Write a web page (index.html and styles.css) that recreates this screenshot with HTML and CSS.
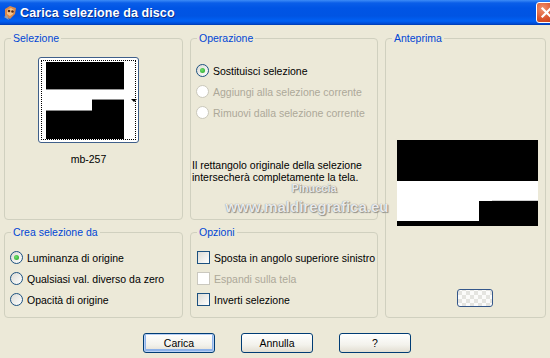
FILE: index.html
```html
<!DOCTYPE html>
<html lang="it">
<head>
    <meta charset="UTF-8">
    <title>Carica selezione da disco</title>
    <link rel="stylesheet" href="styles.css">
</head>
<body>
    <div class="window">
        <div class="titlebar">
            <svg class="app-icon" width="15" height="16" viewBox="0 0 15 16">
                <path d="M2 4 L7 1 L13 3 L12 9 L7 14 L2 11 Z" fill="#d9884a"/>
                <path d="M4 5 L8 3 L11 5 L10 9 L7 11 L4 9 Z" fill="#f4c48c"/>
                <circle cx="6" cy="6" r="1.3" fill="#5a2a10"/>
                <circle cx="9.5" cy="6.5" r="1.3" fill="#5a2a10"/>
                <path d="M1 12 L4 10 L6 15 Z" fill="#9aa0a8"/>
            </svg>
            <span class="title">Carica selezione da disco</span>
            <span class="close-btn">
                <svg width="13" height="13" viewBox="0 0 13 13">
                    <path d="M2.5 2.5 L10.5 10.5 M10.5 2.5 L2.5 10.5" stroke="#fff" stroke-width="2.2" stroke-linecap="square"/>
                </svg>
            </span>
        </div>

        <div class="content">
            <div class="groups">
                <fieldset class="group sel-group">
                    <legend>Selezione</legend>
                    <div class="thumb">
                        <div class="thumb-focus">
                            <svg class="thumb-img" width="78" height="77" viewBox="0 0 78 77">
                                <rect x="0" y="0" width="78" height="77" fill="#fff"/>
                                <rect x="0" y="0" width="78" height="27" fill="#000"/>
                                <rect x="0" y="27" width="78" height="1" fill="#9a9a9a"/>
                                <rect x="46" y="38" width="32" height="39" fill="#000"/>
                                <rect x="46" y="37" width="32" height="1" fill="#8a8a8a"/>
                                <rect x="0" y="49" width="78" height="28" fill="#000"/>
                                <rect x="0" y="48" width="46" height="1" fill="#8a8a8a"/>
                            </svg>
                            <span class="combo-arrow"></span>
                        </div>
                    </div>
                    <div class="thumb-name">mb-257</div>
                </fieldset>

                <fieldset class="group op-group">
                    <legend>Operazione</legend>
                    <div class="option"><span class="radio checked"></span>Sostituisci selezione</div>
                    <div class="option disabled"><span class="radio"></span>Aggiungi alla selezione corrente</div>
                    <div class="option disabled"><span class="radio"></span>Rimuovi dalla selezione corrente</div>
                    <p class="info">Il rettangolo originale della selezione intersecherà completamente la tela.</p>
                </fieldset>

                <fieldset class="group preview-group">
                    <legend>Anteprima</legend>
                    <svg class="preview-img" width="141" height="86" viewBox="0 0 141 86">
                        <rect x="0" y="0" width="141" height="86" fill="#fff"/>
                        <rect x="0" y="0" width="141" height="41" fill="#000"/>
                        <rect x="82" y="61" width="59" height="25" fill="#000"/>
                        <rect x="95" y="60" width="46" height="1" fill="#d0d0d0"/>
                        <rect x="0" y="81" width="141" height="5" fill="#000"/>
                    </svg>
                    <span class="zoom-btn"></span>
                </fieldset>

                <fieldset class="group source-group">
                    <legend>Crea selezione da</legend>
                    <div class="option"><span class="radio checked"></span>Luminanza di origine</div>
                    <div class="option"><span class="radio"></span>Qualsiasi val. diverso da zero</div>
                    <div class="option"><span class="radio"></span>Opacità di origine</div>
                </fieldset>

                <fieldset class="group options-group">
                    <legend>Opzioni</legend>
                    <div class="option"><span class="check"></span>Sposta in angolo superiore sinistro</div>
                    <div class="option disabled"><span class="check"></span>Espandi sulla tela</div>
                    <div class="option"><span class="check"></span>Inverti selezione</div>
                </fieldset>
            </div>

            <div class="buttons">
                <button class="btn default">Carica</button>
                <button class="btn">Annulla</button>
                <button class="btn">?</button>
            </div>

            <div class="watermark">
                <span class="wm-name">Pinuccia</span>
                <span class="wm-site">www.maldiregrafica.eu</span>
            </div>
        </div>
    </div>
</body>
</html>
```

FILE: styles.css
```css
body {
    margin: 0;
    padding: 0;
    background-color: #ece9d8;
    font-family: "Liberation Sans", Arial, sans-serif;
    font-size: 10.5px;
    color: #000;
}
.window {
    width: 550px;
    height: 358px;
    overflow: hidden;
}
.titlebar {
    height: 25px;
    display: flex;
    align-items: center;
    padding-left: 3px;
    overflow: hidden;
    background: linear-gradient(#3d8cf7 0, #0a5ee8 3px, #0055e5 8px, #0054e3 16px, #0061f4 21px, #0048d0 24px, #003aa8 25px);
}
.app-icon {
    flex: none;
    margin-right: 2px;
}
.title {
    flex: 1;
    color: #fff;
    font-weight: bold;
    font-size: 12.5px;
    letter-spacing: 0.1px;
    text-shadow: 1px 1px 0 #0b2e8a;
}
.close-btn {
    flex: none;
    width: 21px;
    height: 21px;
    box-sizing: border-box;
    margin-right: -7px;
    border: 1px solid #fff;
    border-radius: 3px;
    background: radial-gradient(circle at 30% 30%, #f0926f, #d9542d 55%, #c2380f);
    display: flex;
    align-items: center;
    justify-content: center;
}
.content {
    position: relative;
    padding: 7px 4px 0;
}
.groups {
    display: grid;
    grid-template-columns: 179px 188px 161px;
    grid-template-rows: 188px 92px;
    column-gap: 7px;
    row-gap: 6px;
}
.group {
    margin: 0;
    padding: 0;
    min-width: 0;
    border: 1px solid #d0d0bf;
    border-radius: 4px;
}
.group legend {
    margin-left: 6px;
    padding: 0 2px;
    color: #0046d5;
    line-height: 13px;
}
.preview-group {
    grid-column: 3;
    grid-row: 1 / 3;
}
.thumb {
    width: 101px;
    height: 86px;
    box-sizing: border-box;
    margin: 12px 0 0 33px;
    padding: 2px;
    border: 1px solid #3f5f8a;
    border-radius: 3px;
    background-color: #fff;
}
.thumb-focus {
    height: 100%;
    box-sizing: border-box;
    border: 1px dotted #000;
    padding: 1px 0 0 4px;
    display: flex;
    align-items: flex-start;
}
.thumb-img {
    display: block;
    flex: none;
}
.combo-arrow {
    align-self: center;
    margin-left: 7px;
    width: 0;
    height: 0;
    border-left: 3px solid transparent;
    border-right: 3px solid transparent;
    border-top: 3px solid #000;
}
.thumb-name {
    margin: 10px 0 0 33px;
    width: 101px;
    text-align: center;
}
.op-group {
    padding-top: 15px;
}
.source-group,
.options-group {
    padding-top: 8px;
}
.option {
    display: flex;
    align-items: center;
    gap: 4px;
    height: 21px;
    padding-left: 5px;
    white-space: nowrap;
}
.option.disabled {
    color: #aca899;
}
.radio {
    flex: none;
    width: 13px;
    height: 13px;
    box-sizing: border-box;
    border: 1px solid #1c5180;
    border-radius: 50%;
    background: linear-gradient(135deg, #dcdbd5, #fff);
    display: flex;
    align-items: center;
    justify-content: center;
}
.radio.checked::after {
    content: "";
    width: 5px;
    height: 5px;
    border-radius: 50%;
    background: radial-gradient(circle at 40% 40%, #6fe06f, #21a121);
}
.option.disabled .radio {
    border-color: #cac8bb;
    background: #fff;
}
.check {
    flex: none;
    width: 13px;
    height: 13px;
    box-sizing: border-box;
    margin-left: 1px;
    border: 1px solid #1c5180;
    background: linear-gradient(135deg, #dcdbd5, #fff);
}
.option.disabled .check {
    border-color: #cac8bf;
    background: #fff;
}
.info {
    margin: 36px 0 0 1px;
    line-height: 12px;
}
.preview-img {
    display: block;
    margin: 95px 0 0 11px;
}
.zoom-btn {
    display: block;
    width: 36px;
    height: 18px;
    box-sizing: border-box;
    margin: 63px 0 0 71px;
    border: 1px solid #35578a;
    border-radius: 3px;
    background-color: #f4f4f0;
    background-image: conic-gradient(#e4e4e0 25%, #fbfbfa 0 50%, #e4e4e0 0 75%, #fbfbfa 0);
    background-size: 8px 8px;
    background-position: 4px 1px;
}
.buttons {
    display: flex;
    justify-content: center;
    gap: 26px;
    margin-top: 15px;
    padding-left: 4px;
}
.btn {
    width: 72px;
    height: 20px;
    padding: 0;
    font-family: inherit;
    font-size: 10.5px;
    color: #000;
    border: 1px solid #003c74;
    border-radius: 3px;
    background: linear-gradient(#fff, #f3f2ec 60%, #e2ded2);
}
.btn.default {
    box-shadow: inset 0 0 0 1px #b8d0f5, inset 0 -1px 0 2px #8db2e9;
}
.watermark {
    position: absolute;
    left: 214px;
    top: 157px;
    width: 186px;
    display: flex;
    flex-direction: column;
    align-items: center;
    color: rgba(255, 255, 255, 0.85);
    font-weight: bold;
    text-shadow: 0 0 1px #6f6f6f, 1px 1px 1px rgba(90, 90, 90, 0.6);
    pointer-events: none;
}
.wm-name {
    font-size: 11px;
    margin-left: 14px;
}
.wm-site {
    font-size: 15px;
    margin-top: 4px;
}
```
